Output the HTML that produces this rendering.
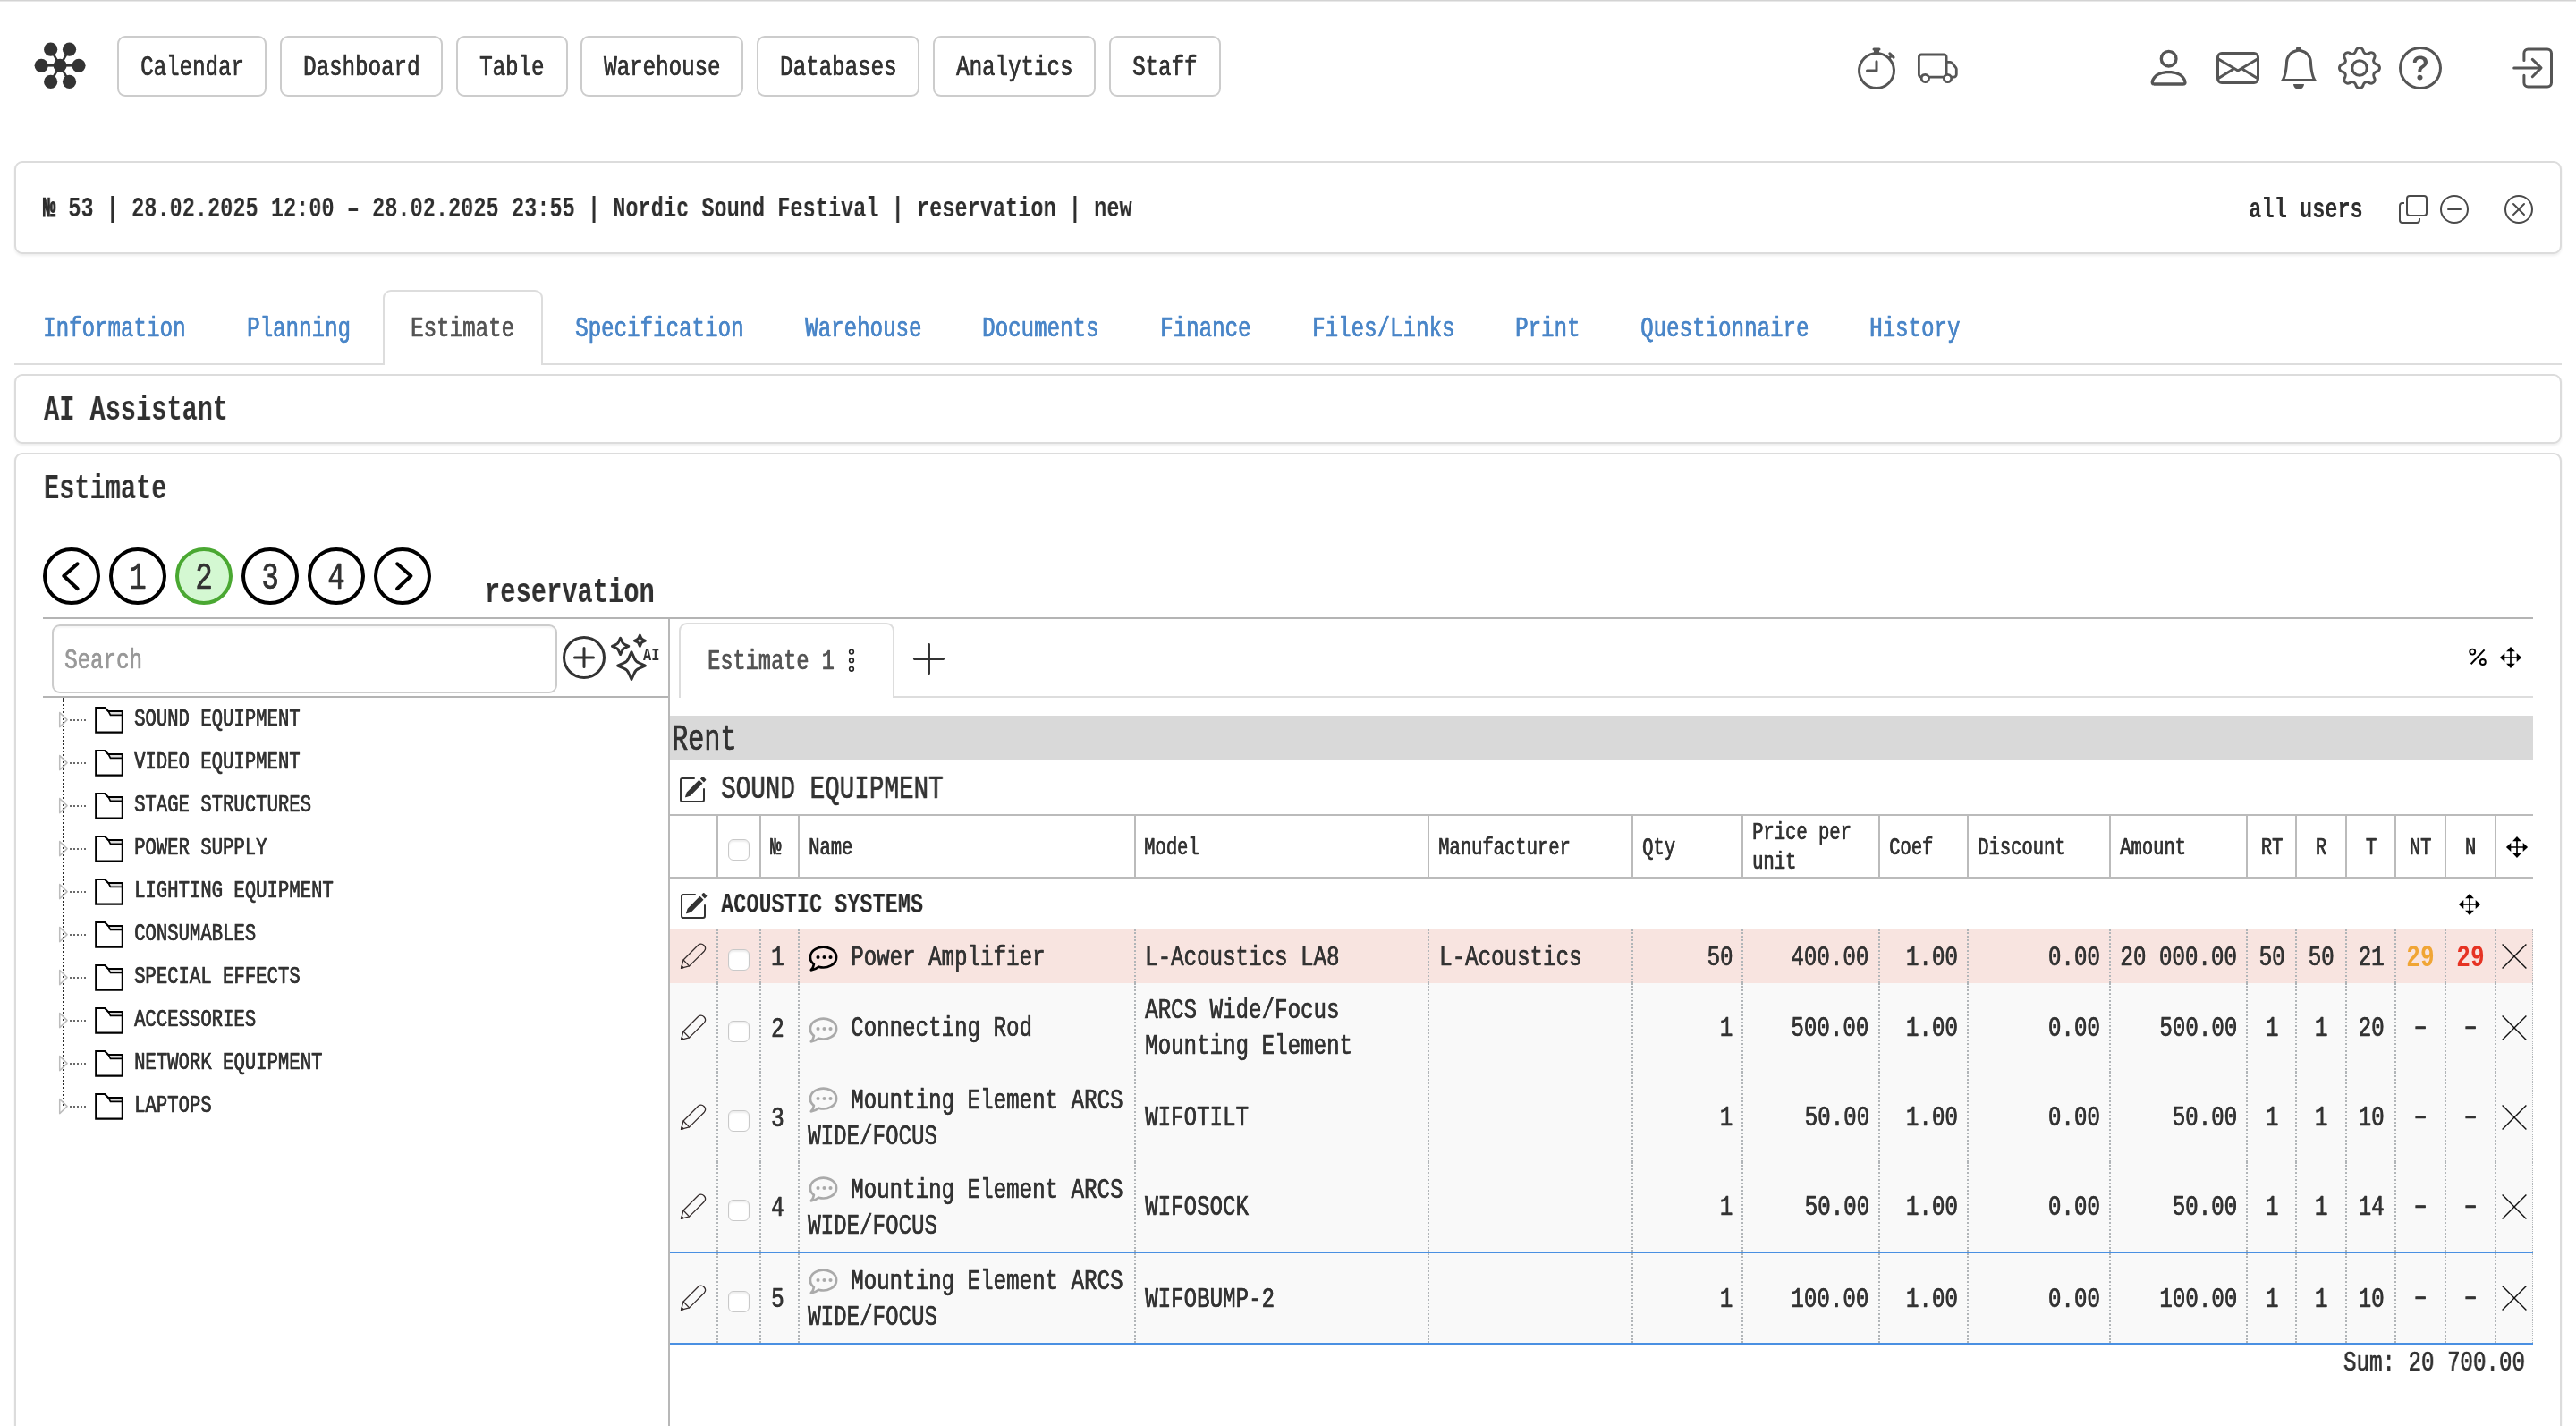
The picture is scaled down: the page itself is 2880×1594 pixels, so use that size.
<!DOCTYPE html>
<html lang="en"><head><meta charset="utf-8"><title>Estimate — Nordic Sound Festival</title>
<style>
*{box-sizing:content-box;margin:0;padding:0}
html,body{width:2880px;height:1594px;overflow:hidden;background:#fff}
body{position:relative;font-family:"Liberation Mono",monospace;color:#333}
.topline{position:absolute;left:0;top:0;width:2880px;height:1px;background:#d3d3d3;box-shadow:0 1px 0 #e8e8e8}
ul,li{list-style:none}
#app{position:absolute;left:0;top:0;width:2880px;height:1594px;overflow:hidden;will-change:transform;transform-origin:0 0}
@media (max-width:1500px) and (min-resolution:2dppx){html,body{width:1440px;height:797px}#app{transform:scale(.5)}}
.t{position:absolute;white-space:pre;line-height:1;font-family:"Liberation Mono",monospace;font-weight:400;font-style:normal;
 transform-origin:0 0;transform:scaleX(0.755);color:#333;-webkit-text-stroke:.5px currentColor;text-shadow:.5px 0 0 currentColor;text-decoration:none;display:block}
.t.b{font-weight:700;-webkit-text-stroke:0;text-shadow:none}
.t.r{transform-origin:100% 0}
.t.c{transform-origin:50% 0;transform:translateX(-50%) scaleX(0.755)}
.i{position:absolute;display:block;overflow:visible}
.card{border:2px solid #dcdcdc;border-radius:9px;background:#fff;box-shadow:0 2px 3px rgba(0,0,0,.07)}
.cb{border:1px solid #c9c9c9;border-radius:6px;background:#fff;box-shadow:inset 0 2px 2px rgba(0,0,0,.07)}
</style></head>
<body>
<div id="app">
<div class="topline"></div>
<header>
<svg class="i" style="left:0.00px;top:0.00px" width="130" height="130" viewBox="0 0 130 130" ><line x1="67.1" y1="73.3" x2="88.00" y2="73.30" stroke="#333" stroke-width="2.600"/><circle cx="88.00" cy="73.30" r="7.6" fill="#333"/><line x1="67.1" y1="73.3" x2="77.55" y2="91.40" stroke="#333" stroke-width="2.600"/><circle cx="77.55" cy="91.40" r="7.6" fill="#333"/><line x1="67.1" y1="73.3" x2="56.65" y2="91.40" stroke="#333" stroke-width="2.600"/><circle cx="56.65" cy="91.40" r="7.6" fill="#333"/><line x1="67.1" y1="73.3" x2="46.20" y2="73.30" stroke="#333" stroke-width="2.600"/><circle cx="46.20" cy="73.30" r="7.6" fill="#333"/><line x1="67.1" y1="73.3" x2="56.65" y2="55.20" stroke="#333" stroke-width="2.600"/><circle cx="56.65" cy="55.20" r="7.6" fill="#333"/><line x1="67.1" y1="73.3" x2="77.55" y2="55.20" stroke="#333" stroke-width="2.600"/><circle cx="77.55" cy="55.20" r="7.6" fill="#333"/><circle cx="67.1" cy="73.3" r="7.5" fill="#333"/></svg>
<nav>
<a class="navlink">
<i class="btn" style="position:absolute;left:131.00px;top:40.00px;width:163.00px;height:64.00px;border:2px solid #ccc;border-radius:9px;background:#fff"></i>
<span class="t" style="top:60.46px;font-size:32px;left:156.80px;">Calendar</span>
</a>
<a class="navlink">
<i class="btn" style="position:absolute;left:313.00px;top:40.00px;width:178.00px;height:64.00px;border:2px solid #ccc;border-radius:9px;background:#fff"></i>
<span class="t" style="top:60.46px;font-size:32px;left:338.80px;">Dashboard</span>
</a>
<a class="navlink">
<i class="btn" style="position:absolute;left:510.00px;top:40.00px;width:121.00px;height:64.00px;border:2px solid #ccc;border-radius:9px;background:#fff"></i>
<span class="t" style="top:60.46px;font-size:32px;left:535.80px;">Table</span>
</a>
<a class="navlink">
<i class="btn" style="position:absolute;left:649.00px;top:40.00px;width:178.00px;height:64.00px;border:2px solid #ccc;border-radius:9px;background:#fff"></i>
<span class="t" style="top:60.46px;font-size:32px;left:674.80px;">Warehouse</span>
</a>
<a class="navlink">
<i class="btn" style="position:absolute;left:846.00px;top:40.00px;width:178.00px;height:64.00px;border:2px solid #ccc;border-radius:9px;background:#fff"></i>
<span class="t" style="top:60.46px;font-size:32px;left:871.80px;">Databases</span>
</a>
<a class="navlink">
<i class="btn" style="position:absolute;left:1043.00px;top:40.00px;width:178.00px;height:64.00px;border:2px solid #ccc;border-radius:9px;background:#fff"></i>
<span class="t" style="top:60.46px;font-size:32px;left:1068.80px;">Analytics</span>
</a>
<a class="navlink">
<i class="btn" style="position:absolute;left:1240.00px;top:40.00px;width:121.00px;height:64.00px;border:2px solid #ccc;border-radius:9px;background:#fff"></i>
<span class="t" style="top:60.46px;font-size:32px;left:1265.80px;">Staff</span>
</a>
</nav>
<svg class="i" style="left:2073.80px;top:51.80px" width="48" height="48" viewBox="0 0 16 16" fill="#555"><path d="M8.5 5.6a.5.5 0 1 0-1 0v2.9h-3a.5.5 0 0 0 0 1H8a.5.5 0 0 0 .5-.5V5.6z"/><path d="M6.5 1A.5.5 0 0 1 7 .5h2a.5.5 0 0 1 0 1v.57c1.36.196 2.594.78 3.584 1.64a.715.715 0 0 1 .012-.013l.354-.354-.354-.353a.5.5 0 0 1 .707-.708l1.414 1.415a.5.5 0 1 1-.707.707l-.353-.354-.354.354a.512.512 0 0 1-.013.012A7 7 0 1 1 7 2.071V1.500a.5.5 0 0 1-.5-.5zM8 3a6 6 0 1 0 .001 12A6 6 0 0 0 8 3z"/></svg>
<svg class="i" style="left:2143.70px;top:53.70px" width="44.7" height="44.7" viewBox="0 0 16 16" fill="#555"><path d="M0 3.5A1.5 1.5 0 0 1 1.5 2h9A1.5 1.5 0 0 1 12 3.5V5h1.020a1.5 1.5 0 0 1 1.170.563l1.481 1.850a1.5 1.5 0 0 1 .329.938V10.500a1.5 1.5 0 0 1-1.500 1.500H14a2 2 0 1 1-4 0H5a2 2 0 1 1-3.998-.085A1.500 1.500 0 0 1 0 10.500v-7zm1.294 7.456A1.999 1.999 0 0 1 4.732 11h5.536a2.010 2.010 0 0 1 .732-.732V3.500a.5.5 0 0 0-.5-.5h-9a.5.5 0 0 0-.5.5v7a.5.5 0 0 0 .294.456zM12 10a2 2 0 0 1 1.732 1h.768a.5.5 0 0 0 .5-.5V8.350a.5.5 0 0 0-.110-.312l-1.480-1.850A.5.5 0 0 0 13.020 6H12v4zm-9 1a1 1 0 1 0 0 2 1 1 0 0 0 0-2zm9 0a1 1 0 1 0 0 2 1 1 0 0 0 0-2z"/></svg>
<svg class="i" style="left:2397.50px;top:49.20px" width="53.3" height="53.3" viewBox="0 0 16 16" fill="#555"><path d="M8 8a3 3 0 1 0 0-6 3 3 0 0 0 0 6zm2-3a2 2 0 1 1-4 0 2 2 0 0 1 4 0zm4 8c0 1-1 1-1 1H3s-1 0-1-1 1-4 6-4 6 3 6 4zm-1-.004c-.001-.246-.154-.986-.832-1.664C11.516 10.680 10.289 10 8 10c-2.290 0-3.516.680-4.168 1.332-.678.678-.830 1.418-.832 1.664h10z"/></svg>
<svg class="i" style="left:2478.00px;top:52.00px" width="48" height="48" viewBox="0 0 16 16" fill="#555"><path d="M0 4a2 2 0 0 1 2-2h12a2 2 0 0 1 2 2v8a2 2 0 0 1-2 2H2a2 2 0 0 1-2-2V4zm2-1a1 1 0 0 0-1 1v.217l7 4.200 7-4.200V4a1 1 0 0 0-1-1H2zm13 2.383-4.708 2.825L15 11.105V5.383zm-.034 6.876-5.640-3.471L8 9.583l-1.326-.795-5.640 3.470A1 1 0 0 0 2 13h12a1 1 0 0 0 .966-.741zM1 11.105l4.708-2.897L1 5.383v5.722z"/></svg>
<svg class="i" style="left:2546.00px;top:52.00px" width="48" height="48" viewBox="0 0 16 16" fill="#555"><path d="M8 16a2 2 0 0 0 2-2H6a2 2 0 0 0 2 2zM8 1.918l-.797.161A4.002 4.002 0 0 0 4 6c0 .628-.134 2.197-.459 3.742-.160.767-.376 1.566-.663 2.258h10.244c-.287-.692-.502-1.490-.663-2.258C12.134 8.197 12 6.628 12 6a4.002 4.002 0 0 0-3.203-3.920L8 1.917zM14.220 12c.223.447.481.801.780 1H1c.299-.199.557-.553.780-1C2.680 10.200 3 6.880 3 6c0-2.420 1.720-4.440 4.005-4.901a1 1 0 1 1 1.990 0A5.002 5.002 0 0 1 13 6c0 .880.320 4.200 1.220 6z"/></svg>
<svg class="i" style="left:2614.00px;top:52.00px" width="48" height="48" viewBox="0 0 16 16" fill="#555"><path d="M8 4.754a3.246 3.246 0 1 0 0 6.492 3.246 3.246 0 0 0 0-6.492zM5.754 8a2.246 2.246 0 1 1 4.492 0 2.246 2.246 0 0 1-4.492 0z"/><path d="M9.796 1.343c-.527-1.790-3.065-1.790-3.592 0l-.094.319a.873.873 0 0 1-1.255.520l-.292-.160c-1.640-.892-3.433.902-2.540 2.541l.159.292a.873.873 0 0 1-.520 1.255l-.319.094c-1.790.527-1.790 3.065 0 3.592l.319.094a.873.873 0 0 1 .520 1.255l-.160.292c-.892 1.640.901 3.434 2.541 2.540l.292-.159a.873.873 0 0 1 1.255.520l.094.319c.527 1.790 3.065 1.790 3.592 0l.094-.319a.873.873 0 0 1 1.255-.520l.292.160c1.640.893 3.434-.902 2.540-2.541l-.159-.292a.873.873 0 0 1 .520-1.255l.319-.094c1.790-.527 1.790-3.065 0-3.592l-.319-.094a.873.873 0 0 1-.520-1.255l.160-.292c.893-1.640-.902-3.433-2.541-2.540l-.292.159a.873.873 0 0 1-1.255-.520l-.094-.319zm-2.633.283c.246-.835 1.428-.835 1.674 0l.094.319a1.873 1.873 0 0 0 2.693 1.115l.291-.160c.764-.415 1.600.420 1.184 1.185l-.159.292a1.873 1.873 0 0 0 1.116 2.692l.318.094c.835.246.835 1.428 0 1.674l-.319.094a1.873 1.873 0 0 0-1.115 2.693l.160.291c.415.764-.420 1.600-1.185 1.184l-.291-.159a1.873 1.873 0 0 0-2.693 1.116l-.094.318c-.246.835-1.428.835-1.674 0l-.094-.319a1.873 1.873 0 0 0-2.692-1.115l-.292.160c-.764.415-1.600-.420-1.184-1.185l.159-.291A1.873 1.873 0 0 0 1.945 8.930l-.319-.094c-.835-.246-.835-1.428 0-1.674l.319-.094A1.873 1.873 0 0 0 3.060 4.377l-.160-.292c-.415-.764.420-1.600 1.185-1.184l.292.159a1.873 1.873 0 0 0 2.692-1.115l.094-.319z"/></svg>
<svg class="i" style="left:2682.00px;top:52.00px" width="48" height="48" viewBox="0 0 16 16" fill="#555"><path d="M8 15A7 7 0 1 1 8 1a7 7 0 0 1 0 14zm0 1A8 8 0 1 0 8 0a8 8 0 0 0 0 16z"/><path d="M5.255 5.786a.237.237 0 0 0 .241.247h.825c.138 0 .248-.113.266-.250.090-.656.540-1.134 1.342-1.134.686 0 1.314.343 1.314 1.168 0 .635-.374.927-.965 1.371-.673.489-1.206 1.060-1.168 1.987l.003.217a.250.250 0 0 0 .250.246h.811a.250.250 0 0 0 .250-.250v-.105c0-.718.273-.927 1.010-1.486.609-.463 1.244-.977 1.244-2.056 0-1.511-1.276-2.241-2.673-2.241-1.267 0-2.655.590-2.750 2.286zm1.557 5.763c0 .533.425.927 1.010.927.609 0 1.028-.394 1.028-.927 0-.552-.420-.940-1.029-.940-.584 0-1.009.388-1.009.940z"/></svg>
<svg class="i" style="left:2800.00px;top:48.00px" width="60" height="56" viewBox="0 0 60 56" ><g fill="none" stroke="#555" stroke-width="3" stroke-linecap="round" stroke-linejoin="round"><path d="M21.9 19.5V11.5a4.5 4.5 0 0 1 4.5-4.5H48a4.5 4.5 0 0 1 4.5 4.5V44.4a4.5 4.5 0 0 1-4.5 4.5H26.4a4.5 4.5 0 0 1-4.500-4.500V36.300"/><path d="M10.700 27.900H40.500M31.300 18.400 41 27.900 31.300 37.700"/></g></svg>
</header>
<section class="order-title">
<div class="card" style="position:absolute;left:16.00px;top:180.00px;width:2843.50px;height:100.00px;"></div>
<h1 class="t b" style="top:218.01px;font-size:31.26px;left:48.20px;color:#2e2e2e;"><span style="-webkit-text-stroke:1.1px currentColor">№</span> 53 | 28.02.2025 12:00 – 28.02.2025 23:55 | Nordic Sound Festival | reservation | new</h1>
<span class="t b r" style="top:219.11px;font-size:31.26px;right:238.00px;color:#2e2e2e;">all users</span>
<svg class="i" style="left:2682.00px;top:218.00px" width="32" height="32" viewBox="0 0 16 16" fill="#4a4a4a"><path fill-rule="evenodd" d="M4 2a2 2 0 0 1 2-2h8a2 2 0 0 1 2 2v8a2 2 0 0 1-2 2H6a2 2 0 0 1-2-2V2zm2-1a1 1 0 0 0-1 1v8a1 1 0 0 0 1 1h8a1 1 0 0 0 1-1V2a1 1 0 0 0-1-1H6zM2 5a1 1 0 0 0-1 1v8a1 1 0 0 0 1 1h8a1 1 0 0 0 1-1v-1h1v1a2 2 0 0 1-2 2H2a2 2 0 0 1-2-2V6a2 2 0 0 1 2-2h1v1H2z"/></svg>
<svg class="i" style="left:2728.00px;top:218.00px" width="32" height="32" viewBox="0 0 16 16" fill="#4a4a4a"><path d="M8 15A7 7 0 1 1 8 1a7 7 0 0 1 0 14zm0 1A8 8 0 1 0 8 0a8 8 0 0 0 0 16z"/><path d="M4 8a.5.5 0 0 1 .5-.5h7a.5.5 0 0 1 0 1h-7A.5.5 0 0 1 4 8z"/></svg>
<svg class="i" style="left:2800.00px;top:218.00px" width="32" height="32" viewBox="0 0 16 16" fill="#4a4a4a"><path d="M8 15A7 7 0 1 1 8 1a7 7 0 0 1 0 14zm0 1A8 8 0 1 0 8 0a8 8 0 0 0 0 16z"/><path d="M4.646 4.646a.5.5 0 0 1 .708 0L8 7.293l2.646-2.647a.5.5 0 0 1 .708.708L8.707 8l2.647 2.646a.5.5 0 0 1-.708.708L8 8.707l-2.646 2.647a.5.5 0 0 1-.708-.708L7.293 8 4.646 5.354a.5.5 0 0 1 0-.708z"/></svg>
</section>
<nav class="tabs">
<div class="" style="position:absolute;left:16.00px;top:406.00px;width:2848.00px;height:2.00px;background:#ddd"></div>
<a class="t" style="top:352.36px;font-size:32px;left:47.80px;color:#4a86c8;">Information</a>
<a class="t" style="top:352.36px;font-size:32px;left:275.90px;color:#4a86c8;">Planning</a>
<div class="" style="position:absolute;left:428.00px;top:324.00px;width:174.50px;height:82.00px;border:2px solid #ddd;border-bottom:0;border-radius:9px 9px 0 0;background:#fff"></div>
<span class="t" style="top:352.36px;font-size:32px;left:458.70px;color:#555;">Estimate</span>
<a class="t" style="top:352.36px;font-size:32px;left:643.20px;color:#4a86c8;">Specification</a>
<a class="t" style="top:352.36px;font-size:32px;left:900.00px;color:#4a86c8;">Warehouse</a>
<a class="t" style="top:352.36px;font-size:32px;left:1098.20px;color:#4a86c8;">Documents</a>
<a class="t" style="top:352.36px;font-size:32px;left:1296.70px;color:#4a86c8;">Finance</a>
<a class="t" style="top:352.36px;font-size:32px;left:1467.10px;color:#4a86c8;">Files/Links</a>
<a class="t" style="top:352.36px;font-size:32px;left:1694.40px;color:#4a86c8;">Print</a>
<a class="t" style="top:352.36px;font-size:32px;left:1833.70px;color:#4a86c8;">Questionnaire</a>
<a class="t" style="top:352.36px;font-size:32px;left:2089.50px;color:#4a86c8;">History</a>
</nav>
<section class="ai-assistant">
<div class="card" style="position:absolute;left:16.00px;top:418.00px;width:2843.50px;height:74.00px;"></div>
<h2 class="t b" style="top:440.16px;font-size:37.9px;left:49.00px;color:#303030;">AI Assistant</h2>
</section>
<main class="estimate">
<div class="card" style="position:absolute;left:16.00px;top:506.00px;width:2843.50px;height:1200.00px;"></div>
<h2 class="t b" style="top:528.36px;font-size:37.9px;left:49.00px;color:#303030;">Estimate</h2>
<div class="pg" style="position:absolute;left:47.80px;top:611.80px;width:56.00px;height:56.00px;border:4px solid #000;border-radius:50%;background:#fff"></div>
<svg class="i" style="left:47.80px;top:611.80px" width="64" height="64" viewBox="0 0 64 64" ><path d="M38.6 18.3 L23.3 31.8 L38.6 46" fill="none" stroke="#000" stroke-width="4.1" stroke-linecap="round" stroke-linejoin="round"/></svg>
<div class="pg" style="position:absolute;left:121.90px;top:611.80px;width:56.00px;height:56.00px;border:4px solid #000;border-radius:50%;background:#fff"></div>
<span class="t  c" style="top:626.34px;font-size:42.5px;left:153.90px;color:#333;">1</span>
<div class="pg" style="position:absolute;left:196.10px;top:611.80px;width:56.00px;height:56.00px;border:4px solid #4aa832;border-radius:50%;background:#d4f8d2"></div>
<span class="t  c" style="top:626.34px;font-size:42.5px;left:228.10px;color:#333;">2</span>
<div class="pg" style="position:absolute;left:270.00px;top:611.80px;width:56.00px;height:56.00px;border:4px solid #000;border-radius:50%;background:#fff"></div>
<span class="t  c" style="top:626.34px;font-size:42.5px;left:302.00px;color:#333;">3</span>
<div class="pg" style="position:absolute;left:343.90px;top:611.80px;width:56.00px;height:56.00px;border:4px solid #000;border-radius:50%;background:#fff"></div>
<span class="t  c" style="top:626.34px;font-size:42.5px;left:375.90px;color:#333;">4</span>
<div class="pg" style="position:absolute;left:417.90px;top:611.80px;width:56.00px;height:56.00px;border:4px solid #000;border-radius:50%;background:#fff"></div>
<svg class="i" style="left:417.90px;top:611.80px" width="64" height="64" viewBox="0 0 64 64" ><path d="M26.1 18.3 L41.4 31.8 L26.1 46" fill="none" stroke="#000" stroke-width="4.1" stroke-linecap="round" stroke-linejoin="round"/></svg>
<span class="t b" style="top:644.42px;font-size:38.1px;left:542.30px;color:#303030;">reservation</span>
<div class="" style="position:absolute;left:48.00px;top:690.00px;width:2784.00px;height:2.00px;background:#b4b4b4"></div>
<div class="" style="position:absolute;left:48.00px;top:778.00px;width:700.00px;height:2.00px;background:#b4b4b4"></div>
<div class="" style="position:absolute;left:747.00px;top:692.00px;width:2.00px;height:910.00px;background:#b8b8b8"></div>
<div class="inp" style="position:absolute;left:58.00px;top:698.00px;width:561.00px;height:73.00px;border:2px solid #ccc;border-radius:9px;background:#fff;box-shadow:inset 0 2px 2px rgba(0,0,0,.04)"></div>
<span class="t" style="top:723.46px;font-size:32px;left:71.80px;color:#999;">Search</span>
<svg class="i" style="left:629.00px;top:711.00px" width="48" height="48" viewBox="0 0 16 16" fill="#333"><path d="M8 15A7 7 0 1 1 8 1a7 7 0 0 1 0 14zm0 1A8 8 0 1 0 8 0a8 8 0 0 0 0 16z"/><path d="M8 4a.5.5 0 0 1 .5.5v3h3a.5.5 0 0 1 0 1h-3v3a.5.5 0 0 1-1 0v-3h-3a.5.5 0 0 1 0-1h3v-3A.5.5 0 0 1 8 4z"/></svg>
<svg class="i" style="left:681.80px;top:711.20px" width="60" height="56" viewBox="0 0 60 56" fill="none" stroke="#333" stroke-width="2.9" stroke-linejoin="round"><path d="M24.00 17.70 L27.04 24.43 A8.90 8.90 0 0 0 32.68 30.06 L39.40 33.10 L32.68 36.14 A8.90 8.90 0 0 0 27.04 41.77 L24.00 48.50 L20.96 41.77 A8.90 8.90 0 0 0 15.32 36.14 L8.60 33.10 L15.32 30.06 A8.90 8.90 0 0 0 20.96 24.43 L24.00 17.70Z"/><path d="M11.60 2.20 L13.42 6.22 A5.32 5.32 0 0 0 16.78 9.58 L20.80 11.40 L16.78 13.22 A5.32 5.32 0 0 0 13.42 16.58 L11.60 20.60 L9.78 16.58 A5.32 5.32 0 0 0 6.42 13.22 L2.40 11.40 L6.42 9.58 A5.32 5.32 0 0 0 9.78 6.22 L11.60 2.20Z"/><path d="M33.40 -0.90 L34.61 1.76 A3.53 3.53 0 0 0 36.84 3.99 L39.50 5.20 L36.84 6.41 A3.53 3.53 0 0 0 34.61 8.64 L33.40 11.30 L32.19 8.64 A3.53 3.53 0 0 0 29.96 6.41 L27.30 5.20 L29.96 3.99 A3.53 3.53 0 0 0 32.19 1.76 L33.40 -0.90Z"/></svg>
<span class="t b" style="top:722.78px;font-size:20.7px;left:718.80px;color:#333;transform:scaleX(.74);">AI</span>
<ul class="tree">
<div class="" style="position:absolute;left:70.00px;top:780.00px;width:0.00px;height:456.40px;border-left:2px dotted #2a2a2a"></div>
<li>
<div class="" style="position:absolute;left:78.00px;top:804.00px;width:18.00px;height:0.00px;border-top:2px dotted #6a6a6a"></div>
<svg class="i" style="left:64.00px;top:794.40px" width="14" height="20" viewBox="0 0 14 20" ><path d="M2.700 2.600 L11.100 10.600 L2.700 18.600Z" fill="none" stroke="#bdbdbd" stroke-width="1.500" stroke-linejoin="round"/></svg>
<svg class="i" style="left:104.00px;top:787.80px" width="36" height="34" viewBox="0 0 36 34" ><path d="M17.8 8H32v2.800H19.400z" fill="#ddd"/><path d="M3.250 30.650V2.950H13.200L17 7H32.850V30.650Z" fill="none" stroke="#000" stroke-width="2.150" stroke-linejoin="miter"/><path d="M17.400 7.400 19.500 11.400H32.800" stroke="#000" stroke-width="1.700" fill="none"/></svg>
<span class="t" style="top:790.36px;font-size:27.3px;left:150.20px;">SOUND EQUIPMENT</span>
</li>
<li>
<div class="" style="position:absolute;left:78.00px;top:852.00px;width:18.00px;height:0.00px;border-top:2px dotted #6a6a6a"></div>
<svg class="i" style="left:64.00px;top:842.40px" width="14" height="20" viewBox="0 0 14 20" ><path d="M2.700 2.600 L11.100 10.600 L2.700 18.600Z" fill="none" stroke="#bdbdbd" stroke-width="1.500" stroke-linejoin="round"/></svg>
<svg class="i" style="left:104.00px;top:835.80px" width="36" height="34" viewBox="0 0 36 34" ><path d="M17.8 8H32v2.800H19.400z" fill="#ddd"/><path d="M3.250 30.650V2.950H13.200L17 7H32.850V30.650Z" fill="none" stroke="#000" stroke-width="2.150" stroke-linejoin="miter"/><path d="M17.400 7.400 19.500 11.400H32.800" stroke="#000" stroke-width="1.700" fill="none"/></svg>
<span class="t" style="top:838.36px;font-size:27.3px;left:150.20px;">VIDEO EQUIPMENT</span>
</li>
<li>
<div class="" style="position:absolute;left:78.00px;top:900.00px;width:18.00px;height:0.00px;border-top:2px dotted #6a6a6a"></div>
<svg class="i" style="left:64.00px;top:890.40px" width="14" height="20" viewBox="0 0 14 20" ><path d="M2.700 2.600 L11.100 10.600 L2.700 18.600Z" fill="none" stroke="#bdbdbd" stroke-width="1.500" stroke-linejoin="round"/></svg>
<svg class="i" style="left:104.00px;top:883.80px" width="36" height="34" viewBox="0 0 36 34" ><path d="M17.8 8H32v2.800H19.400z" fill="#ddd"/><path d="M3.250 30.650V2.950H13.200L17 7H32.850V30.650Z" fill="none" stroke="#000" stroke-width="2.150" stroke-linejoin="miter"/><path d="M17.400 7.400 19.500 11.400H32.800" stroke="#000" stroke-width="1.700" fill="none"/></svg>
<span class="t" style="top:886.36px;font-size:27.3px;left:150.20px;">STAGE STRUCTURES</span>
</li>
<li>
<div class="" style="position:absolute;left:78.00px;top:948.00px;width:18.00px;height:0.00px;border-top:2px dotted #6a6a6a"></div>
<svg class="i" style="left:64.00px;top:938.40px" width="14" height="20" viewBox="0 0 14 20" ><path d="M2.700 2.600 L11.100 10.600 L2.700 18.600Z" fill="none" stroke="#bdbdbd" stroke-width="1.500" stroke-linejoin="round"/></svg>
<svg class="i" style="left:104.00px;top:931.80px" width="36" height="34" viewBox="0 0 36 34" ><path d="M17.8 8H32v2.800H19.400z" fill="#ddd"/><path d="M3.250 30.650V2.950H13.200L17 7H32.850V30.650Z" fill="none" stroke="#000" stroke-width="2.150" stroke-linejoin="miter"/><path d="M17.400 7.400 19.500 11.400H32.800" stroke="#000" stroke-width="1.700" fill="none"/></svg>
<span class="t" style="top:934.36px;font-size:27.3px;left:150.20px;">POWER SUPPLY</span>
</li>
<li>
<div class="" style="position:absolute;left:78.00px;top:996.00px;width:18.00px;height:0.00px;border-top:2px dotted #6a6a6a"></div>
<svg class="i" style="left:64.00px;top:986.40px" width="14" height="20" viewBox="0 0 14 20" ><path d="M2.700 2.600 L11.100 10.600 L2.700 18.600Z" fill="none" stroke="#bdbdbd" stroke-width="1.500" stroke-linejoin="round"/></svg>
<svg class="i" style="left:104.00px;top:979.80px" width="36" height="34" viewBox="0 0 36 34" ><path d="M17.8 8H32v2.800H19.400z" fill="#ddd"/><path d="M3.250 30.650V2.950H13.200L17 7H32.850V30.650Z" fill="none" stroke="#000" stroke-width="2.150" stroke-linejoin="miter"/><path d="M17.400 7.400 19.500 11.400H32.800" stroke="#000" stroke-width="1.700" fill="none"/></svg>
<span class="t" style="top:982.36px;font-size:27.3px;left:150.20px;">LIGHTING EQUIPMENT</span>
</li>
<li>
<div class="" style="position:absolute;left:78.00px;top:1044.00px;width:18.00px;height:0.00px;border-top:2px dotted #6a6a6a"></div>
<svg class="i" style="left:64.00px;top:1034.40px" width="14" height="20" viewBox="0 0 14 20" ><path d="M2.700 2.600 L11.100 10.600 L2.700 18.600Z" fill="none" stroke="#bdbdbd" stroke-width="1.500" stroke-linejoin="round"/></svg>
<svg class="i" style="left:104.00px;top:1027.80px" width="36" height="34" viewBox="0 0 36 34" ><path d="M17.8 8H32v2.800H19.400z" fill="#ddd"/><path d="M3.250 30.650V2.950H13.200L17 7H32.850V30.650Z" fill="none" stroke="#000" stroke-width="2.150" stroke-linejoin="miter"/><path d="M17.400 7.400 19.500 11.400H32.800" stroke="#000" stroke-width="1.700" fill="none"/></svg>
<span class="t" style="top:1030.36px;font-size:27.3px;left:150.20px;">CONSUMABLES</span>
</li>
<li>
<div class="" style="position:absolute;left:78.00px;top:1092.00px;width:18.00px;height:0.00px;border-top:2px dotted #6a6a6a"></div>
<svg class="i" style="left:64.00px;top:1082.40px" width="14" height="20" viewBox="0 0 14 20" ><path d="M2.700 2.600 L11.100 10.600 L2.700 18.600Z" fill="none" stroke="#bdbdbd" stroke-width="1.500" stroke-linejoin="round"/></svg>
<svg class="i" style="left:104.00px;top:1075.80px" width="36" height="34" viewBox="0 0 36 34" ><path d="M17.8 8H32v2.800H19.400z" fill="#ddd"/><path d="M3.250 30.650V2.950H13.200L17 7H32.850V30.650Z" fill="none" stroke="#000" stroke-width="2.150" stroke-linejoin="miter"/><path d="M17.400 7.400 19.500 11.400H32.800" stroke="#000" stroke-width="1.700" fill="none"/></svg>
<span class="t" style="top:1078.36px;font-size:27.3px;left:150.20px;">SPECIAL EFFECTS</span>
</li>
<li>
<div class="" style="position:absolute;left:78.00px;top:1140.00px;width:18.00px;height:0.00px;border-top:2px dotted #6a6a6a"></div>
<svg class="i" style="left:64.00px;top:1130.40px" width="14" height="20" viewBox="0 0 14 20" ><path d="M2.700 2.600 L11.100 10.600 L2.700 18.600Z" fill="none" stroke="#bdbdbd" stroke-width="1.500" stroke-linejoin="round"/></svg>
<svg class="i" style="left:104.00px;top:1123.80px" width="36" height="34" viewBox="0 0 36 34" ><path d="M17.8 8H32v2.800H19.400z" fill="#ddd"/><path d="M3.250 30.650V2.950H13.200L17 7H32.850V30.650Z" fill="none" stroke="#000" stroke-width="2.150" stroke-linejoin="miter"/><path d="M17.400 7.400 19.500 11.400H32.800" stroke="#000" stroke-width="1.700" fill="none"/></svg>
<span class="t" style="top:1126.36px;font-size:27.3px;left:150.20px;">ACCESSORIES</span>
</li>
<li>
<div class="" style="position:absolute;left:78.00px;top:1188.00px;width:18.00px;height:0.00px;border-top:2px dotted #6a6a6a"></div>
<svg class="i" style="left:64.00px;top:1178.40px" width="14" height="20" viewBox="0 0 14 20" ><path d="M2.700 2.600 L11.100 10.600 L2.700 18.600Z" fill="none" stroke="#bdbdbd" stroke-width="1.500" stroke-linejoin="round"/></svg>
<svg class="i" style="left:104.00px;top:1171.80px" width="36" height="34" viewBox="0 0 36 34" ><path d="M17.8 8H32v2.800H19.400z" fill="#ddd"/><path d="M3.250 30.650V2.950H13.200L17 7H32.850V30.650Z" fill="none" stroke="#000" stroke-width="2.150" stroke-linejoin="miter"/><path d="M17.400 7.400 19.500 11.400H32.800" stroke="#000" stroke-width="1.700" fill="none"/></svg>
<span class="t" style="top:1174.36px;font-size:27.3px;left:150.20px;">NETWORK EQUIPMENT</span>
</li>
<li>
<div class="" style="position:absolute;left:78.00px;top:1236.00px;width:18.00px;height:0.00px;border-top:2px dotted #6a6a6a"></div>
<svg class="i" style="left:64.00px;top:1226.40px" width="14" height="20" viewBox="0 0 14 20" ><path d="M2.700 2.600 L11.100 10.600 L2.700 18.600Z" fill="none" stroke="#bdbdbd" stroke-width="1.500" stroke-linejoin="round"/></svg>
<svg class="i" style="left:104.00px;top:1219.80px" width="36" height="34" viewBox="0 0 36 34" ><path d="M17.8 8H32v2.800H19.400z" fill="#ddd"/><path d="M3.250 30.650V2.950H13.200L17 7H32.850V30.650Z" fill="none" stroke="#000" stroke-width="2.150" stroke-linejoin="miter"/><path d="M17.400 7.400 19.500 11.400H32.800" stroke="#000" stroke-width="1.700" fill="none"/></svg>
<span class="t" style="top:1222.36px;font-size:27.3px;left:150.20px;">LAPTOPS</span>
</li>
</ul>
<div class="" style="position:absolute;left:759.00px;top:696.00px;width:236.50px;height:82.00px;border:2px solid #ddd;border-bottom:0;border-radius:9px 9px 0 0;background:#fff"></div>
<div class="" style="position:absolute;left:999.50px;top:778.00px;width:1832.50px;height:2.00px;background:#ddd"></div>
<span class="t" style="top:724.18px;font-size:31.3px;left:791.20px;color:#555;">Estimate 1</span>
<svg class="i" style="left:944.00px;top:722.00px" width="16" height="32" viewBox="0 0 16 32" ><circle cx="8" cy="6.6" r="2.350" fill="#fff" stroke="#222" stroke-width="1.600"/><circle cx="8" cy="16.2" r="2.350" fill="#fff" stroke="#222" stroke-width="1.600"/><circle cx="8" cy="25.8" r="2.350" fill="#fff" stroke="#222" stroke-width="1.600"/></svg>
<svg class="i" style="left:1014.60px;top:712.90px" width="47" height="47" viewBox="0 0 16 16" fill="#333"><path fill-rule="evenodd" d="M8 2a.5.5 0 0 1 .5.5v5h5a.5.5 0 0 1 0 1h-5v5a.5.5 0 0 1-1 0v-5h-5a.5.5 0 0 1 0-1h5v-5A.5.5 0 0 1 8 2z"/></svg>
<svg class="i" style="left:2758.00px;top:722.00px" width="24" height="24" viewBox="0 0 24 24" ><path d="M4.600 20.200 L19.600 4.400" stroke="#000" stroke-width="2" stroke-linecap="butt"/><circle cx="6.200" cy="6.600" r="3" fill="none" stroke="#000" stroke-width="1.900"/><circle cx="17.800" cy="18" r="3" fill="none" stroke="#000" stroke-width="1.900"/></svg>
<svg class="i" style="left:2795.30px;top:722.70px" width="24" height="24" viewBox="0 0 24 24" ><path d="M12 3V21M3 12H21" stroke="#000" stroke-width="1.700" fill="none"/><path d="M12 -0.100 L16.900 5.300 H7.100Z M12 24.100 L16.900 18.700 H7.100Z M-0.100 12 L5.300 7.100 V16.900Z M24.100 12 L18.700 7.100 V16.900Z" fill="#000"/></svg>
<div class="band" style="position:absolute;left:749.00px;top:800.00px;width:2083.00px;height:50.00px;background:#d9d9d9"></div>
<span class="t" style="top:807.70px;font-size:40px;left:750.50px;color:#333;">Rent</span>
<svg class="i" style="left:757.60px;top:866.80px" width="32" height="32" viewBox="0 0 16 16" fill="#333"><path d="M15.502 1.940a.5.5 0 0 1 0 .706L14.459 3.690l-2-2L13.502.646a.5.5 0 0 1 .707 0l1.293 1.293zm-1.750 2.456-2-2L4.939 9.210a.5.5 0 0 0-.121.196l-.805 2.414a.250.250 0 0 0 .316.316l2.414-.805a.5.5 0 0 0 .196-.120l6.813-6.814z"/><path fill-rule="evenodd" d="M1 13.500A1.500 1.500 0 0 0 2.500 15h11a1.500 1.500 0 0 0 1.500-1.500v-6a.5.5 0 0 0-1 0v6a.5.5 0 0 1-.5.5h-11a.5.5 0 0 1-.5-.5v-11a.5.5 0 0 1 .5-.5H9a.5.5 0 0 0 0-1H2.500A1.500 1.500 0 0 0 1 2.500v11z"/></svg>
<h3 class="t" style="top:865.13px;font-size:36.6px;left:806.00px;color:#333;">SOUND EQUIPMENT</h3>
<div class="thead">
<div class="" style="position:absolute;left:749.00px;top:910.00px;width:2083.00px;height:2.00px;background:#bbb"></div>
<div class="" style="position:absolute;left:749.00px;top:980.00px;width:2083.00px;height:2.00px;background:#bbb"></div>
<div class="" style="position:absolute;left:801.00px;top:912.00px;width:2.00px;height:68.00px;background:#bbb"></div>
<div class="" style="position:absolute;left:849.00px;top:912.00px;width:2.00px;height:68.00px;background:#bbb"></div>
<div class="" style="position:absolute;left:891.80px;top:912.00px;width:2.00px;height:68.00px;background:#bbb"></div>
<div class="" style="position:absolute;left:1267.90px;top:912.00px;width:2.00px;height:68.00px;background:#bbb"></div>
<div class="" style="position:absolute;left:1595.90px;top:912.00px;width:2.00px;height:68.00px;background:#bbb"></div>
<div class="" style="position:absolute;left:1823.80px;top:912.00px;width:2.00px;height:68.00px;background:#bbb"></div>
<div class="" style="position:absolute;left:1946.80px;top:912.00px;width:2.00px;height:68.00px;background:#bbb"></div>
<div class="" style="position:absolute;left:2099.90px;top:912.00px;width:2.00px;height:68.00px;background:#bbb"></div>
<div class="" style="position:absolute;left:2199.00px;top:912.00px;width:2.00px;height:68.00px;background:#bbb"></div>
<div class="" style="position:absolute;left:2357.80px;top:912.00px;width:2.00px;height:68.00px;background:#bbb"></div>
<div class="" style="position:absolute;left:2510.80px;top:912.00px;width:2.00px;height:68.00px;background:#bbb"></div>
<div class="" style="position:absolute;left:2566.20px;top:912.00px;width:2.00px;height:68.00px;background:#bbb"></div>
<div class="" style="position:absolute;left:2622.00px;top:912.00px;width:2.00px;height:68.00px;background:#bbb"></div>
<div class="" style="position:absolute;left:2677.00px;top:912.00px;width:2.00px;height:68.00px;background:#bbb"></div>
<div class="" style="position:absolute;left:2732.80px;top:912.00px;width:2.00px;height:68.00px;background:#bbb"></div>
<div class="" style="position:absolute;left:2788.80px;top:912.00px;width:2.00px;height:68.00px;background:#bbb"></div>
<div class="cb" style="position:absolute;left:814.10px;top:938.10px;width:21.70px;height:21.70px;"></div>
<span class="t" style="top:934.34px;font-size:27.2px;left:860.50px;">№</span>
<span class="t" style="top:934.34px;font-size:27.2px;left:903.80px;">Name</span>
<span class="t" style="top:934.34px;font-size:27.2px;left:1279.40px;">Model</span>
<span class="t" style="top:934.34px;font-size:27.2px;left:1607.60px;">Manufacturer</span>
<span class="t" style="top:934.34px;font-size:27.2px;left:1835.80px;">Qty</span>
<span class="t" style="top:917.34px;font-size:27.2px;left:1959.40px;">Price per</span>
<span class="t" style="top:950.34px;font-size:27.2px;left:1959.40px;">unit</span>
<span class="t" style="top:934.34px;font-size:27.2px;left:2112.00px;">Coef</span>
<span class="t" style="top:934.34px;font-size:27.2px;left:2211.00px;">Discount</span>
<span class="t" style="top:934.34px;font-size:27.2px;left:2370.00px;">Amount</span>
<span class="t  c" style="top:934.34px;font-size:27.2px;left:2539.50px;">RT</span>
<span class="t  c" style="top:934.34px;font-size:27.2px;left:2595.10px;">R</span>
<span class="t  c" style="top:934.34px;font-size:27.2px;left:2650.50px;">T</span>
<span class="t  c" style="top:934.34px;font-size:27.2px;left:2706.00px;">NT</span>
<span class="t  c" style="top:934.34px;font-size:27.2px;left:2761.70px;">N</span>
<svg class="i" style="left:2802.20px;top:934.50px" width="24" height="24" viewBox="0 0 24 24" ><path d="M12 3V21M3 12H21" stroke="#000" stroke-width="1.700" fill="none"/><path d="M12 -0.100 L16.900 5.300 H7.100Z M12 24.100 L16.900 18.700 H7.100Z M-0.100 12 L5.300 7.100 V16.900Z M24.100 12 L18.700 7.100 V16.900Z" fill="#000"/></svg>
</div>
<svg class="i" style="left:759.00px;top:996.70px" width="32" height="32" viewBox="0 0 16 16" fill="#333"><path d="M15.502 1.940a.5.5 0 0 1 0 .706L14.459 3.690l-2-2L13.502.646a.5.5 0 0 1 .707 0l1.293 1.293zm-1.750 2.456-2-2L4.939 9.210a.5.5 0 0 0-.121.196l-.805 2.414a.250.250 0 0 0 .316.316l2.414-.805a.5.5 0 0 0 .196-.120l6.813-6.814z"/><path fill-rule="evenodd" d="M1 13.500A1.500 1.500 0 0 0 2.500 15h11a1.500 1.500 0 0 0 1.500-1.500v-6a.5.5 0 0 0-1 0v6a.5.5 0 0 1-.5.5h-11a.5.5 0 0 1-.5-.5v-11a.5.5 0 0 1 .5-.5H9a.5.5 0 0 0 0-1H2.500A1.500 1.500 0 0 0 1 2.500v11z"/></svg>
<span class="t b" style="top:996.16px;font-size:31.2px;left:805.60px;color:#2a2a2a;">ACOUSTIC SYSTEMS</span>
<svg class="i" style="left:2749.20px;top:998.50px" width="24" height="24" viewBox="0 0 24 24" ><path d="M12 3V21M3 12H21" stroke="#000" stroke-width="1.700" fill="none"/><path d="M12 -0.100 L16.900 5.300 H7.100Z M12 24.100 L16.900 18.700 H7.100Z M-0.100 12 L5.300 7.100 V16.900Z M24.100 12 L18.700 7.100 V16.900Z" fill="#000"/></svg>
<div class="tbody">
<div class="row" role="row">
<div class="tr" style="position:absolute;left:749.00px;top:1039.30px;width:2083.00px;height:59.50px;background:#f8e4e0"></div>
<div class="" style="position:absolute;left:801.00px;top:1039.30px;width:0.00px;height:59.50px;border-left:2px dotted #b1b5b8"></div>
<div class="" style="position:absolute;left:849.00px;top:1039.30px;width:0.00px;height:59.50px;border-left:2px dotted #b1b5b8"></div>
<div class="" style="position:absolute;left:891.80px;top:1039.30px;width:0.00px;height:59.50px;border-left:2px dotted #b1b5b8"></div>
<div class="" style="position:absolute;left:1267.90px;top:1039.30px;width:0.00px;height:59.50px;border-left:2px dotted #b1b5b8"></div>
<div class="" style="position:absolute;left:1595.90px;top:1039.30px;width:0.00px;height:59.50px;border-left:2px dotted #b1b5b8"></div>
<div class="" style="position:absolute;left:1823.80px;top:1039.30px;width:0.00px;height:59.50px;border-left:2px dotted #b1b5b8"></div>
<div class="" style="position:absolute;left:1946.80px;top:1039.30px;width:0.00px;height:59.50px;border-left:2px dotted #b1b5b8"></div>
<div class="" style="position:absolute;left:2099.90px;top:1039.30px;width:0.00px;height:59.50px;border-left:2px dotted #b1b5b8"></div>
<div class="" style="position:absolute;left:2199.00px;top:1039.30px;width:0.00px;height:59.50px;border-left:2px dotted #b1b5b8"></div>
<div class="" style="position:absolute;left:2357.80px;top:1039.30px;width:0.00px;height:59.50px;border-left:2px dotted #b1b5b8"></div>
<div class="" style="position:absolute;left:2510.80px;top:1039.30px;width:0.00px;height:59.50px;border-left:2px dotted #b1b5b8"></div>
<div class="" style="position:absolute;left:2566.20px;top:1039.30px;width:0.00px;height:59.50px;border-left:2px dotted #b1b5b8"></div>
<div class="" style="position:absolute;left:2622.00px;top:1039.30px;width:0.00px;height:59.50px;border-left:2px dotted #b1b5b8"></div>
<div class="" style="position:absolute;left:2677.00px;top:1039.30px;width:0.00px;height:59.50px;border-left:2px dotted #b1b5b8"></div>
<div class="" style="position:absolute;left:2732.80px;top:1039.30px;width:0.00px;height:59.50px;border-left:2px dotted #b1b5b8"></div>
<div class="" style="position:absolute;left:2788.80px;top:1039.30px;width:0.00px;height:59.50px;border-left:2px dotted #b1b5b8"></div>
<div class="" style="position:absolute;left:2831.00px;top:1039.30px;width:0.00px;height:59.50px;border-left:1px dotted #b4b8bb"></div>
<svg class="i" style="left:760.00px;top:1054.05px" width="30" height="30" viewBox="0 0 30 30" ><g fill="none" stroke="#352c2c" stroke-width="1.250" stroke-linejoin="round" stroke-linecap="round"><path d="M4 19 L20.700 2.300 A4.800 4.800 0 0 1 27.300 9.200 L10.600 25.900 L1.500 28.300 Z"/><path d="M4 19 L10.600 25.900"/><path d="M1.500 28.300 L2.200 25.700 L4.100 27.600Z" fill="#352c2c"/></g></svg>
<div class="cb" style="position:absolute;left:814.10px;top:1061.25px;width:21.70px;height:21.70px;"></div>
<span class="t" style="top:1055.41px;font-size:32px;left:861.60px;">1</span>
<svg class="i" style="left:905.00px;top:1056.85px" width="34" height="30" viewBox="0 0 34 30" ><path d="M10.300 23.700 A14.600 11.400 0 1 0 4.900 20.900 Q4.500 24.600 1.800 27.300 Q6.600 26.800 10.300 23.700Z" fill="none" stroke="#000" stroke-width="2.700" stroke-linejoin="round"/><circle cx="9.5" cy="13" r="2.050" fill="#000"/><circle cx="16.5" cy="13" r="2.050" fill="#000"/><circle cx="23.5" cy="13" r="2.050" fill="#000"/></svg>
<span class="t" style="top:1054.61px;font-size:32px;left:950.60px;">Power Amplifier</span>
<span class="t" style="top:1054.61px;font-size:32px;left:1279.60px;">L-Acoustics LA8</span>
<span class="t" style="top:1054.61px;font-size:32px;left:1608.60px;">L-Acoustics</span>
<span class="t  r" style="top:1054.61px;font-size:32px;right:943.00px;">50</span>
<span class="t  r" style="top:1054.61px;font-size:32px;right:790.40px;">400.00</span>
<span class="t  r" style="top:1054.61px;font-size:32px;right:691.20px;">1.00</span>
<span class="t  r" style="top:1054.61px;font-size:32px;right:532.20px;">0.00</span>
<span class="t  r" style="top:1054.61px;font-size:32px;right:379.20px;">20 000.00</span>
<span class="t  c" style="top:1054.61px;font-size:32px;left:2539.50px;">50</span>
<span class="t  c" style="top:1054.61px;font-size:32px;left:2595.10px;">50</span>
<span class="t  c" style="top:1054.61px;font-size:32px;left:2650.50px;">21</span>
<span class="t b c" style="top:1053.87px;font-size:34.6px;left:2706.00px;color:#f0a535;">29</span>
<span class="t b c" style="top:1053.87px;font-size:34.6px;left:2761.70px;color:#e63323;">29</span>
<svg class="i" style="left:2796.00px;top:1054.05px" width="30" height="30" viewBox="0 0 30 30" ><path d="M1.6 1.6 L28.4 28.4 M28.4 1.6 L1.6 28.4" stroke="#111" stroke-width="1.400" fill="none"/></svg>
</div>
<div class="row" role="row">
<div class="tr" style="position:absolute;left:749.00px;top:1098.80px;width:2083.00px;height:100.00px;background:#f9f9f9"></div>
<div class="" style="position:absolute;left:801.00px;top:1098.80px;width:0.00px;height:100.00px;border-left:2px dotted #b1b5b8"></div>
<div class="" style="position:absolute;left:849.00px;top:1098.80px;width:0.00px;height:100.00px;border-left:2px dotted #b1b5b8"></div>
<div class="" style="position:absolute;left:891.80px;top:1098.80px;width:0.00px;height:100.00px;border-left:2px dotted #b1b5b8"></div>
<div class="" style="position:absolute;left:1267.90px;top:1098.80px;width:0.00px;height:100.00px;border-left:2px dotted #b1b5b8"></div>
<div class="" style="position:absolute;left:1595.90px;top:1098.80px;width:0.00px;height:100.00px;border-left:2px dotted #b1b5b8"></div>
<div class="" style="position:absolute;left:1823.80px;top:1098.80px;width:0.00px;height:100.00px;border-left:2px dotted #b1b5b8"></div>
<div class="" style="position:absolute;left:1946.80px;top:1098.80px;width:0.00px;height:100.00px;border-left:2px dotted #b1b5b8"></div>
<div class="" style="position:absolute;left:2099.90px;top:1098.80px;width:0.00px;height:100.00px;border-left:2px dotted #b1b5b8"></div>
<div class="" style="position:absolute;left:2199.00px;top:1098.80px;width:0.00px;height:100.00px;border-left:2px dotted #b1b5b8"></div>
<div class="" style="position:absolute;left:2357.80px;top:1098.80px;width:0.00px;height:100.00px;border-left:2px dotted #b1b5b8"></div>
<div class="" style="position:absolute;left:2510.80px;top:1098.80px;width:0.00px;height:100.00px;border-left:2px dotted #b1b5b8"></div>
<div class="" style="position:absolute;left:2566.20px;top:1098.80px;width:0.00px;height:100.00px;border-left:2px dotted #b1b5b8"></div>
<div class="" style="position:absolute;left:2622.00px;top:1098.80px;width:0.00px;height:100.00px;border-left:2px dotted #b1b5b8"></div>
<div class="" style="position:absolute;left:2677.00px;top:1098.80px;width:0.00px;height:100.00px;border-left:2px dotted #b1b5b8"></div>
<div class="" style="position:absolute;left:2732.80px;top:1098.80px;width:0.00px;height:100.00px;border-left:2px dotted #b1b5b8"></div>
<div class="" style="position:absolute;left:2788.80px;top:1098.80px;width:0.00px;height:100.00px;border-left:2px dotted #b1b5b8"></div>
<div class="" style="position:absolute;left:2831.00px;top:1098.80px;width:0.00px;height:100.00px;border-left:1px dotted #b4b8bb"></div>
<svg class="i" style="left:760.00px;top:1133.80px" width="30" height="30" viewBox="0 0 30 30" ><g fill="none" stroke="#352c2c" stroke-width="1.250" stroke-linejoin="round" stroke-linecap="round"><path d="M4 19 L20.700 2.300 A4.800 4.800 0 0 1 27.300 9.200 L10.600 25.900 L1.500 28.300 Z"/><path d="M4 19 L10.600 25.900"/><path d="M1.500 28.300 L2.200 25.700 L4.100 27.600Z" fill="#352c2c"/></g></svg>
<div class="cb" style="position:absolute;left:814.10px;top:1141.00px;width:21.70px;height:21.70px;"></div>
<span class="t" style="top:1135.16px;font-size:32px;left:861.60px;">2</span>
<svg class="i" style="left:905.00px;top:1136.60px" width="34" height="30" viewBox="0 0 34 30" ><path d="M10.300 23.700 A14.600 11.400 0 1 0 4.900 20.900 Q4.500 24.600 1.800 27.300 Q6.600 26.800 10.300 23.700Z" fill="none" stroke="#aaa" stroke-width="2.700" stroke-linejoin="round"/><circle cx="9.5" cy="13" r="2.050" fill="#aaa"/><circle cx="16.5" cy="13" r="2.050" fill="#aaa"/><circle cx="23.5" cy="13" r="2.050" fill="#aaa"/></svg>
<span class="t" style="top:1134.36px;font-size:32px;left:950.60px;">Connecting Rod</span>
<span class="t" style="top:1113.56px;font-size:32px;left:1279.60px;">ARCS Wide/Focus</span>
<span class="t" style="top:1153.96px;font-size:32px;left:1279.60px;">Mounting Element</span>
<span class="t  r" style="top:1134.36px;font-size:32px;right:943.00px;">1</span>
<span class="t  r" style="top:1134.36px;font-size:32px;right:790.40px;">500.00</span>
<span class="t  r" style="top:1134.36px;font-size:32px;right:691.20px;">1.00</span>
<span class="t  r" style="top:1134.36px;font-size:32px;right:532.20px;">0.00</span>
<span class="t  r" style="top:1134.36px;font-size:32px;right:379.20px;">500.00</span>
<span class="t  c" style="top:1134.36px;font-size:32px;left:2539.50px;">1</span>
<span class="t  c" style="top:1134.36px;font-size:32px;left:2595.10px;">1</span>
<span class="t  c" style="top:1134.36px;font-size:32px;left:2650.50px;">20</span>
<span class="t  c" style="top:1133.16px;font-size:32px;left:2706.00px;transform:translateX(-50%) scaleX(1.2);">-</span>
<span class="t  c" style="top:1133.16px;font-size:32px;left:2761.70px;transform:translateX(-50%) scaleX(1.2);">-</span>
<svg class="i" style="left:2796.00px;top:1133.80px" width="30" height="30" viewBox="0 0 30 30" ><path d="M1.6 1.6 L28.4 28.4 M28.4 1.6 L1.6 28.4" stroke="#111" stroke-width="1.400" fill="none"/></svg>
</div>
<div class="row" role="row">
<div class="tr" style="position:absolute;left:749.00px;top:1198.80px;width:2083.00px;height:100.00px;background:#f9f9f9"></div>
<div class="" style="position:absolute;left:801.00px;top:1198.80px;width:0.00px;height:100.00px;border-left:2px dotted #b1b5b8"></div>
<div class="" style="position:absolute;left:849.00px;top:1198.80px;width:0.00px;height:100.00px;border-left:2px dotted #b1b5b8"></div>
<div class="" style="position:absolute;left:891.80px;top:1198.80px;width:0.00px;height:100.00px;border-left:2px dotted #b1b5b8"></div>
<div class="" style="position:absolute;left:1267.90px;top:1198.80px;width:0.00px;height:100.00px;border-left:2px dotted #b1b5b8"></div>
<div class="" style="position:absolute;left:1595.90px;top:1198.80px;width:0.00px;height:100.00px;border-left:2px dotted #b1b5b8"></div>
<div class="" style="position:absolute;left:1823.80px;top:1198.80px;width:0.00px;height:100.00px;border-left:2px dotted #b1b5b8"></div>
<div class="" style="position:absolute;left:1946.80px;top:1198.80px;width:0.00px;height:100.00px;border-left:2px dotted #b1b5b8"></div>
<div class="" style="position:absolute;left:2099.90px;top:1198.80px;width:0.00px;height:100.00px;border-left:2px dotted #b1b5b8"></div>
<div class="" style="position:absolute;left:2199.00px;top:1198.80px;width:0.00px;height:100.00px;border-left:2px dotted #b1b5b8"></div>
<div class="" style="position:absolute;left:2357.80px;top:1198.80px;width:0.00px;height:100.00px;border-left:2px dotted #b1b5b8"></div>
<div class="" style="position:absolute;left:2510.80px;top:1198.80px;width:0.00px;height:100.00px;border-left:2px dotted #b1b5b8"></div>
<div class="" style="position:absolute;left:2566.20px;top:1198.80px;width:0.00px;height:100.00px;border-left:2px dotted #b1b5b8"></div>
<div class="" style="position:absolute;left:2622.00px;top:1198.80px;width:0.00px;height:100.00px;border-left:2px dotted #b1b5b8"></div>
<div class="" style="position:absolute;left:2677.00px;top:1198.80px;width:0.00px;height:100.00px;border-left:2px dotted #b1b5b8"></div>
<div class="" style="position:absolute;left:2732.80px;top:1198.80px;width:0.00px;height:100.00px;border-left:2px dotted #b1b5b8"></div>
<div class="" style="position:absolute;left:2788.80px;top:1198.80px;width:0.00px;height:100.00px;border-left:2px dotted #b1b5b8"></div>
<div class="" style="position:absolute;left:2831.00px;top:1198.80px;width:0.00px;height:100.00px;border-left:1px dotted #b4b8bb"></div>
<svg class="i" style="left:760.00px;top:1233.80px" width="30" height="30" viewBox="0 0 30 30" ><g fill="none" stroke="#352c2c" stroke-width="1.250" stroke-linejoin="round" stroke-linecap="round"><path d="M4 19 L20.700 2.300 A4.800 4.800 0 0 1 27.300 9.200 L10.600 25.900 L1.500 28.300 Z"/><path d="M4 19 L10.600 25.900"/><path d="M1.500 28.300 L2.200 25.700 L4.100 27.600Z" fill="#352c2c"/></g></svg>
<div class="cb" style="position:absolute;left:814.10px;top:1241.00px;width:21.70px;height:21.70px;"></div>
<span class="t" style="top:1235.16px;font-size:32px;left:861.60px;">3</span>
<svg class="i" style="left:905.00px;top:1215.30px" width="34" height="30" viewBox="0 0 34 30" ><path d="M10.300 23.700 A14.600 11.400 0 1 0 4.900 20.900 Q4.500 24.600 1.800 27.300 Q6.600 26.800 10.300 23.700Z" fill="none" stroke="#aaa" stroke-width="2.700" stroke-linejoin="round"/><circle cx="9.5" cy="13" r="2.050" fill="#aaa"/><circle cx="16.5" cy="13" r="2.050" fill="#aaa"/><circle cx="23.5" cy="13" r="2.050" fill="#aaa"/></svg>
<span class="t" style="top:1215.06px;font-size:32px;left:950.60px;">Mounting Element ARCS</span>
<span class="t" style="top:1255.06px;font-size:32px;left:903.40px;">WIDE/FOCUS</span>
<span class="t" style="top:1234.36px;font-size:32px;left:1279.60px;">WIFOTILT</span>
<span class="t  r" style="top:1234.36px;font-size:32px;right:943.00px;">1</span>
<span class="t  r" style="top:1234.36px;font-size:32px;right:790.40px;">50.00</span>
<span class="t  r" style="top:1234.36px;font-size:32px;right:691.20px;">1.00</span>
<span class="t  r" style="top:1234.36px;font-size:32px;right:532.20px;">0.00</span>
<span class="t  r" style="top:1234.36px;font-size:32px;right:379.20px;">50.00</span>
<span class="t  c" style="top:1234.36px;font-size:32px;left:2539.50px;">1</span>
<span class="t  c" style="top:1234.36px;font-size:32px;left:2595.10px;">1</span>
<span class="t  c" style="top:1234.36px;font-size:32px;left:2650.50px;">10</span>
<span class="t  c" style="top:1233.16px;font-size:32px;left:2706.00px;transform:translateX(-50%) scaleX(1.2);">-</span>
<span class="t  c" style="top:1233.16px;font-size:32px;left:2761.70px;transform:translateX(-50%) scaleX(1.2);">-</span>
<svg class="i" style="left:2796.00px;top:1233.80px" width="30" height="30" viewBox="0 0 30 30" ><path d="M1.6 1.6 L28.4 28.4 M28.4 1.6 L1.6 28.4" stroke="#111" stroke-width="1.400" fill="none"/></svg>
</div>
<div class="row" role="row">
<div class="tr" style="position:absolute;left:749.00px;top:1298.80px;width:2083.00px;height:100.20px;background:#f9f9f9"></div>
<div class="" style="position:absolute;left:801.00px;top:1298.80px;width:0.00px;height:100.20px;border-left:2px dotted #b1b5b8"></div>
<div class="" style="position:absolute;left:849.00px;top:1298.80px;width:0.00px;height:100.20px;border-left:2px dotted #b1b5b8"></div>
<div class="" style="position:absolute;left:891.80px;top:1298.80px;width:0.00px;height:100.20px;border-left:2px dotted #b1b5b8"></div>
<div class="" style="position:absolute;left:1267.90px;top:1298.80px;width:0.00px;height:100.20px;border-left:2px dotted #b1b5b8"></div>
<div class="" style="position:absolute;left:1595.90px;top:1298.80px;width:0.00px;height:100.20px;border-left:2px dotted #b1b5b8"></div>
<div class="" style="position:absolute;left:1823.80px;top:1298.80px;width:0.00px;height:100.20px;border-left:2px dotted #b1b5b8"></div>
<div class="" style="position:absolute;left:1946.80px;top:1298.80px;width:0.00px;height:100.20px;border-left:2px dotted #b1b5b8"></div>
<div class="" style="position:absolute;left:2099.90px;top:1298.80px;width:0.00px;height:100.20px;border-left:2px dotted #b1b5b8"></div>
<div class="" style="position:absolute;left:2199.00px;top:1298.80px;width:0.00px;height:100.20px;border-left:2px dotted #b1b5b8"></div>
<div class="" style="position:absolute;left:2357.80px;top:1298.80px;width:0.00px;height:100.20px;border-left:2px dotted #b1b5b8"></div>
<div class="" style="position:absolute;left:2510.80px;top:1298.80px;width:0.00px;height:100.20px;border-left:2px dotted #b1b5b8"></div>
<div class="" style="position:absolute;left:2566.20px;top:1298.80px;width:0.00px;height:100.20px;border-left:2px dotted #b1b5b8"></div>
<div class="" style="position:absolute;left:2622.00px;top:1298.80px;width:0.00px;height:100.20px;border-left:2px dotted #b1b5b8"></div>
<div class="" style="position:absolute;left:2677.00px;top:1298.80px;width:0.00px;height:100.20px;border-left:2px dotted #b1b5b8"></div>
<div class="" style="position:absolute;left:2732.80px;top:1298.80px;width:0.00px;height:100.20px;border-left:2px dotted #b1b5b8"></div>
<div class="" style="position:absolute;left:2788.80px;top:1298.80px;width:0.00px;height:100.20px;border-left:2px dotted #b1b5b8"></div>
<div class="" style="position:absolute;left:2831.00px;top:1298.80px;width:0.00px;height:100.20px;border-left:1px dotted #b4b8bb"></div>
<svg class="i" style="left:760.00px;top:1333.90px" width="30" height="30" viewBox="0 0 30 30" ><g fill="none" stroke="#352c2c" stroke-width="1.250" stroke-linejoin="round" stroke-linecap="round"><path d="M4 19 L20.700 2.300 A4.800 4.800 0 0 1 27.300 9.200 L10.600 25.900 L1.500 28.300 Z"/><path d="M4 19 L10.600 25.900"/><path d="M1.500 28.300 L2.200 25.700 L4.100 27.600Z" fill="#352c2c"/></g></svg>
<div class="cb" style="position:absolute;left:814.10px;top:1341.10px;width:21.70px;height:21.70px;"></div>
<span class="t" style="top:1335.26px;font-size:32px;left:861.60px;">4</span>
<svg class="i" style="left:905.00px;top:1315.40px" width="34" height="30" viewBox="0 0 34 30" ><path d="M10.300 23.700 A14.600 11.400 0 1 0 4.900 20.900 Q4.500 24.600 1.800 27.300 Q6.600 26.800 10.300 23.700Z" fill="none" stroke="#aaa" stroke-width="2.700" stroke-linejoin="round"/><circle cx="9.5" cy="13" r="2.050" fill="#aaa"/><circle cx="16.5" cy="13" r="2.050" fill="#aaa"/><circle cx="23.5" cy="13" r="2.050" fill="#aaa"/></svg>
<span class="t" style="top:1315.16px;font-size:32px;left:950.60px;">Mounting Element ARCS</span>
<span class="t" style="top:1355.16px;font-size:32px;left:903.40px;">WIDE/FOCUS</span>
<span class="t" style="top:1334.46px;font-size:32px;left:1279.60px;">WIFOSOCK</span>
<span class="t  r" style="top:1334.46px;font-size:32px;right:943.00px;">1</span>
<span class="t  r" style="top:1334.46px;font-size:32px;right:790.40px;">50.00</span>
<span class="t  r" style="top:1334.46px;font-size:32px;right:691.20px;">1.00</span>
<span class="t  r" style="top:1334.46px;font-size:32px;right:532.20px;">0.00</span>
<span class="t  r" style="top:1334.46px;font-size:32px;right:379.20px;">50.00</span>
<span class="t  c" style="top:1334.46px;font-size:32px;left:2539.50px;">1</span>
<span class="t  c" style="top:1334.46px;font-size:32px;left:2595.10px;">1</span>
<span class="t  c" style="top:1334.46px;font-size:32px;left:2650.50px;">14</span>
<span class="t  c" style="top:1333.26px;font-size:32px;left:2706.00px;transform:translateX(-50%) scaleX(1.2);">-</span>
<span class="t  c" style="top:1333.26px;font-size:32px;left:2761.70px;transform:translateX(-50%) scaleX(1.2);">-</span>
<svg class="i" style="left:2796.00px;top:1333.90px" width="30" height="30" viewBox="0 0 30 30" ><path d="M1.6 1.6 L28.4 28.4 M28.4 1.6 L1.6 28.4" stroke="#111" stroke-width="1.400" fill="none"/></svg>
</div>
<div class="" style="position:absolute;left:749.00px;top:1399.00px;width:2083.00px;height:2.00px;background:#4a90e2"></div>
<div class="row" role="row">
<div class="tr" style="position:absolute;left:749.00px;top:1401.00px;width:2083.00px;height:100.00px;background:#f9f9f9"></div>
<div class="" style="position:absolute;left:801.00px;top:1401.00px;width:0.00px;height:100.00px;border-left:2px dotted #b1b5b8"></div>
<div class="" style="position:absolute;left:849.00px;top:1401.00px;width:0.00px;height:100.00px;border-left:2px dotted #b1b5b8"></div>
<div class="" style="position:absolute;left:891.80px;top:1401.00px;width:0.00px;height:100.00px;border-left:2px dotted #b1b5b8"></div>
<div class="" style="position:absolute;left:1267.90px;top:1401.00px;width:0.00px;height:100.00px;border-left:2px dotted #b1b5b8"></div>
<div class="" style="position:absolute;left:1595.90px;top:1401.00px;width:0.00px;height:100.00px;border-left:2px dotted #b1b5b8"></div>
<div class="" style="position:absolute;left:1823.80px;top:1401.00px;width:0.00px;height:100.00px;border-left:2px dotted #b1b5b8"></div>
<div class="" style="position:absolute;left:1946.80px;top:1401.00px;width:0.00px;height:100.00px;border-left:2px dotted #b1b5b8"></div>
<div class="" style="position:absolute;left:2099.90px;top:1401.00px;width:0.00px;height:100.00px;border-left:2px dotted #b1b5b8"></div>
<div class="" style="position:absolute;left:2199.00px;top:1401.00px;width:0.00px;height:100.00px;border-left:2px dotted #b1b5b8"></div>
<div class="" style="position:absolute;left:2357.80px;top:1401.00px;width:0.00px;height:100.00px;border-left:2px dotted #b1b5b8"></div>
<div class="" style="position:absolute;left:2510.80px;top:1401.00px;width:0.00px;height:100.00px;border-left:2px dotted #b1b5b8"></div>
<div class="" style="position:absolute;left:2566.20px;top:1401.00px;width:0.00px;height:100.00px;border-left:2px dotted #b1b5b8"></div>
<div class="" style="position:absolute;left:2622.00px;top:1401.00px;width:0.00px;height:100.00px;border-left:2px dotted #b1b5b8"></div>
<div class="" style="position:absolute;left:2677.00px;top:1401.00px;width:0.00px;height:100.00px;border-left:2px dotted #b1b5b8"></div>
<div class="" style="position:absolute;left:2732.80px;top:1401.00px;width:0.00px;height:100.00px;border-left:2px dotted #b1b5b8"></div>
<div class="" style="position:absolute;left:2788.80px;top:1401.00px;width:0.00px;height:100.00px;border-left:2px dotted #b1b5b8"></div>
<div class="" style="position:absolute;left:2831.00px;top:1401.00px;width:0.00px;height:100.00px;border-left:1px dotted #b4b8bb"></div>
<svg class="i" style="left:760.00px;top:1436.00px" width="30" height="30" viewBox="0 0 30 30" ><g fill="none" stroke="#352c2c" stroke-width="1.250" stroke-linejoin="round" stroke-linecap="round"><path d="M4 19 L20.700 2.300 A4.800 4.800 0 0 1 27.300 9.200 L10.600 25.900 L1.500 28.300 Z"/><path d="M4 19 L10.600 25.900"/><path d="M1.500 28.300 L2.200 25.700 L4.100 27.600Z" fill="#352c2c"/></g></svg>
<div class="cb" style="position:absolute;left:814.10px;top:1443.20px;width:21.70px;height:21.70px;"></div>
<span class="t" style="top:1437.36px;font-size:32px;left:861.60px;">5</span>
<svg class="i" style="left:905.00px;top:1417.50px" width="34" height="30" viewBox="0 0 34 30" ><path d="M10.300 23.700 A14.600 11.400 0 1 0 4.900 20.900 Q4.500 24.600 1.800 27.300 Q6.600 26.800 10.300 23.700Z" fill="none" stroke="#aaa" stroke-width="2.700" stroke-linejoin="round"/><circle cx="9.5" cy="13" r="2.050" fill="#aaa"/><circle cx="16.5" cy="13" r="2.050" fill="#aaa"/><circle cx="23.5" cy="13" r="2.050" fill="#aaa"/></svg>
<span class="t" style="top:1417.26px;font-size:32px;left:950.60px;">Mounting Element ARCS</span>
<span class="t" style="top:1457.26px;font-size:32px;left:903.40px;">WIDE/FOCUS</span>
<span class="t" style="top:1436.56px;font-size:32px;left:1279.60px;">WIFOBUMP-2</span>
<span class="t  r" style="top:1436.56px;font-size:32px;right:943.00px;">1</span>
<span class="t  r" style="top:1436.56px;font-size:32px;right:790.40px;">100.00</span>
<span class="t  r" style="top:1436.56px;font-size:32px;right:691.20px;">1.00</span>
<span class="t  r" style="top:1436.56px;font-size:32px;right:532.20px;">0.00</span>
<span class="t  r" style="top:1436.56px;font-size:32px;right:379.20px;">100.00</span>
<span class="t  c" style="top:1436.56px;font-size:32px;left:2539.50px;">1</span>
<span class="t  c" style="top:1436.56px;font-size:32px;left:2595.10px;">1</span>
<span class="t  c" style="top:1436.56px;font-size:32px;left:2650.50px;">10</span>
<span class="t  c" style="top:1435.36px;font-size:32px;left:2706.00px;transform:translateX(-50%) scaleX(1.2);">-</span>
<span class="t  c" style="top:1435.36px;font-size:32px;left:2761.70px;transform:translateX(-50%) scaleX(1.2);">-</span>
<svg class="i" style="left:2796.00px;top:1436.00px" width="30" height="30" viewBox="0 0 30 30" ><path d="M1.6 1.6 L28.4 28.4 M28.4 1.6 L1.6 28.4" stroke="#111" stroke-width="1.400" fill="none"/></svg>
</div>
<div class="" style="position:absolute;left:749.00px;top:1501.00px;width:2083.00px;height:2.00px;background:#4a90e2"></div>
</div>
<span class="t  r" style="top:1508.46px;font-size:32px;right:57.50px;">Sum: 20 700.00</span>
</main>
</div>
</body></html>
